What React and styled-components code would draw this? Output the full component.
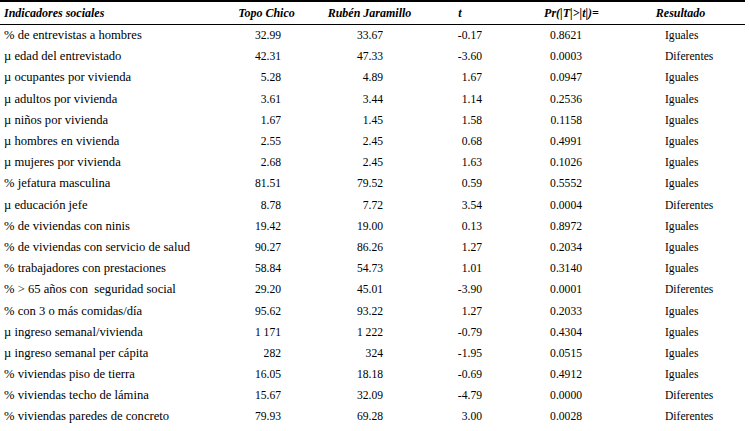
import React from "react";
import styled, { createGlobalStyle, css } from "styled-components";

const serif = css`
  font-family: "Liberation Serif", serif;
  color: #000;
`;

const Global = createGlobalStyle`
  html, body { margin: 0; padding: 0; background: #fff; }
  body { font-family: "Liberation Serif", serif; }
`;

const COLS = "222px 89px 117px 64px 159px 59px 35px";

const Table = styled.div`
  ${serif};
  width: 745px;
  border-top: 2px solid #000;
`;

const HeadRow = styled.div`
  display: grid;
  grid-template-columns: ${COLS};
  height: 22px;
  align-items: center;
  border-bottom: 1px solid #000;
`;

const Row = styled.div`
  display: grid;
  grid-template-columns: ${COLS};
  height: 21.2px;
  align-items: center;
`;

const HeadCell = styled.div`
  ${serif};
  font-size: 12px;
  font-weight: bold;
  font-style: italic;
  white-space: nowrap;
  text-align: ${(p) => (p.$left ? "left" : "center")};
  padding-left: ${(p) => (p.$left ? "4px" : "0")};
`;

const Label = styled.div`
  ${serif};
  font-size: 12.6px;
  padding-left: 4px;
  white-space: pre;
`;

const Num = styled.div`
  ${serif};
  font-size: 11.6px;
  text-align: right;
  padding-right: ${(p) => p.$pr}px;
  white-space: nowrap;
`;

const Result = styled.div`
  ${serif};
  font-size: 11.6px;
  padding-left: 14px;
  white-space: nowrap;
`;

const rows = [
  ["% de entrevistas a hombres", "32.99", "33.67", "-0.17", "0.8621", "Iguales"],
  ["µ edad del entrevistado", "42.31", "47.33", "-3.60", "0.0003", "Diferentes"],
  ["µ ocupantes por vivienda", "5.28", "4.89", "1.67", "0.0947", "Iguales"],
  ["µ adultos por vivienda", "3.61", "3.44", "1.14", "0.2536", "Iguales"],
  ["µ niños por vivienda", "1.67", "1.45", "1.58", "0.1158", "Iguales"],
  ["µ hombres en vivienda", "2.55", "2.45", "0.68", "0.4991", "Iguales"],
  ["µ mujeres por vivienda", "2.68", "2.45", "1.63", "0.1026", "Iguales"],
  ["% jefatura masculina", "81.51", "79.52", "0.59", "0.5552", "Iguales"],
  ["µ educación jefe", "8.78", "7.72", "3.54", "0.0004", "Diferentes"],
  ["% de viviendas con ninis", "19.42", "19.00", "0.13", "0.8972", "Iguales"],
  ["% de viviendas con servicio de salud", "90.27", "86.26", "1.27", "0.2034", "Iguales"],
  ["% trabajadores con prestaciones", "58.84", "54.73", "1.01", "0.3140", "Iguales"],
  ["% > 65 años con  seguridad social", "29.20", "45.01", "-3.90", "0.0001", "Diferentes"],
  ["% con 3 o más comidas/día", "95.62", "93.22", "1.27", "0.2033", "Iguales"],
  ["µ ingreso semanal/vivienda", "1 171", "1 222", "-0.79", "0.4304", "Iguales"],
  ["µ ingreso semanal per cápita", "282", "324", "-1.95", "0.0515", "Iguales"],
  ["% viviendas piso de tierra", "16.05", "18.18", "-0.69", "0.4912", "Iguales"],
  ["% viviendas techo de lámina", "15.67", "32.09", "-4.79", "0.0000", "Diferentes"],
  ["% viviendas paredes de concreto", "79.93", "69.28", "3.00", "0.0028", "Diferentes"],
];

export default function App() {
  return (
    <>
      <Global />
      <Table>
        <HeadRow>
          <HeadCell $left>Indicadores sociales</HeadCell>
          <HeadCell>Topo Chico</HeadCell>
          <HeadCell>Rubén Jaramillo</HeadCell>
          <HeadCell>t</HeadCell>
          <HeadCell>Pr(|T|&gt;|t|)=</HeadCell>
          <HeadCell>Resultado</HeadCell>
          <div />
        </HeadRow>
        {rows.map((r, i) => (
          <Row key={i}>
            <Label>{r[0]}</Label>
            <Num $pr={30}>{r[1]}</Num>
            <Num $pr={45}>{r[2]}</Num>
            <Num $pr={10}>{r[3]}</Num>
            <Num $pr={69}>{r[4]}</Num>
            <Result>{r[5]}</Result>
            <div />
          </Row>
        ))}
      </Table>
    </>
  );
}
